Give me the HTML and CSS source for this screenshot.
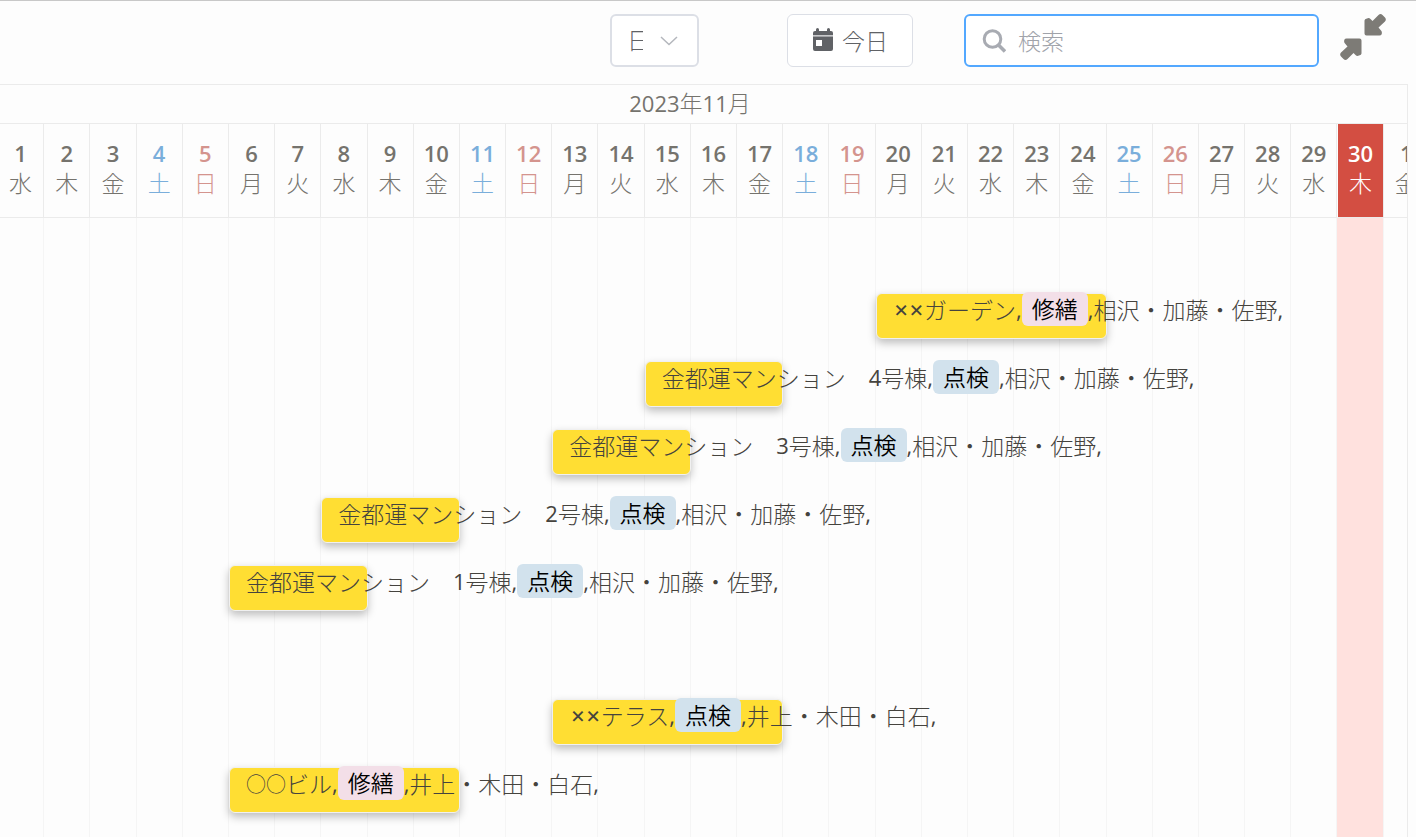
FILE: index.html
```html
<!DOCTYPE html>
<html lang="ja">
<head>
    <meta charset="UTF-8">
    <meta name="viewport" content="width=device-width, initial-scale=1.0">
    <title>工程表</title>
    <link rel="stylesheet" href="styles.css">
</head>
<body>
    <!-- ツールバー -->
    <header class="toolbar">
        <div class="scale">
            <select class="scale-select" aria-label="表示単位">
                <option>日</option>
                <option>週</option>
                <option>月</option>
            </select>
            <svg class="scale-arrow" viewBox="0 0 18 10" width="18" height="10">
                <path d="M1 1l8 7.500 8-7.500" fill="none" stroke="#b4b7bd" stroke-width="1.500"/>
            </svg>
        </div>
        <button type="button" class="today-btn">
            <svg viewBox="0 0 22 24" width="22" height="24" fill="#606266">
                <path d="M4 3V1.500a1.500 1.500 0 0 1 3 0V3h8V1.500a1.500 1.500 0 0 1 3 0V3h1a2 2 0 0 1 2 2v2H1V5a2 2 0 0 1 2-2z"/>
                <path d="M1 7h20v1.500H1z" fill="#c9cacc"/>
                <path fill-rule="evenodd" d="M1 8.500h20V21a2 2 0 0 1-2 2H3a2 2 0 0 1-2-2zM4 12v6h6v-6z"/>
            </svg>
            <span>今日</span>
        </button>
        <div class="search">
            <svg class="search-icon" viewBox="0 0 24 24" width="24" height="24">
                <circle cx="10.500" cy="10" r="8.300" fill="none" stroke="#a8abb2" stroke-width="3"/>
                <path d="M16.500 16l6.500 6.500" stroke="#a8abb2" stroke-width="3.600"/>
            </svg>
            <input type="text" class="search-input" placeholder="検索" aria-label="検索">
        </div>
        <button type="button" class="shrink-btn" aria-label="縮小">
            <svg viewBox="0 0 46 46" width="46" height="46" fill="#7d7b76">
                <path d="M27 4.500Q29 3.500 30.500 5L32.500 7 38.500 1Q40.500-.8 42.500 1L45 3.500Q46.700 5.500 45 7.500L38.500 13.500 41 16.500Q42.500 18 41.500 20.500 41 21.500 39.500 21.500H26.500Q24.500 21.500 24.500 19.500V6.500Q24.500 5 27 4.500z"/>
                <path d="M19 41.500Q17 42.500 15.500 41L13.500 39 7.500 45Q5.500 46.800 3.500 45L1 42.500Q-.7 40.500 1 38.500L7.500 32.500 5 29.500Q3.500 28 4.500 25.500 5 24.500 6.500 24.500H19.500Q21.500 24.500 21.500 26.500V39.500Q21.500 41 19 41.500z"/>
            </svg>
        </button>
    </header>

    <!-- ガントチャート -->
    <main class="gantt">
        <div class="gantt-head">
            <div class="month"><span class="num">2023</span>年<span class="num">11</span>月</div>
            <div class="days" id="days"></div>
        </div>
        <div class="gantt-body">
            <div class="columns" id="columns"></div>
            <div class="row group"></div>
            <div class="row">
                <div class="bar from-20 span-5"><p class="label"><span class="cross">××</span>ガーデン<span class="num">,</span><span class="tag repair">修繕</span><span class="num">,</span>相沢・加藤・佐野<span class="num">,</span></p></div>
            </div>
            <div class="row">
                <div class="bar from-15 span-3"><p class="label">金都運マンション　<span class="num">4</span>号棟<span class="num">,</span><span class="tag check">点検</span><span class="num">,</span>相沢・加藤・佐野<span class="num">,</span></p></div>
            </div>
            <div class="row">
                <div class="bar from-13 span-3"><p class="label">金都運マンション　<span class="num">3</span>号棟<span class="num">,</span><span class="tag check">点検</span><span class="num">,</span>相沢・加藤・佐野<span class="num">,</span></p></div>
            </div>
            <div class="row">
                <div class="bar from-8 span-3"><p class="label">金都運マンション　<span class="num">2</span>号棟<span class="num">,</span><span class="tag check">点検</span><span class="num">,</span>相沢・加藤・佐野<span class="num">,</span></p></div>
            </div>
            <div class="row">
                <div class="bar from-6 span-3"><p class="label">金都運マンション　<span class="num">1</span>号棟<span class="num">,</span><span class="tag check">点検</span><span class="num">,</span>相沢・加藤・佐野<span class="num">,</span></p></div>
            </div>
            <div class="row group"></div>
            <div class="row">
                <div class="bar from-13 span-5"><p class="label"><span class="cross">××</span>テラス<span class="num">,</span><span class="tag check">点検</span><span class="num">,</span>井上・木田・白石<span class="num">,</span></p></div>
            </div>
            <div class="row">
                <div class="bar from-6 span-5"><p class="label"><span class="circle">○○</span>ビル<span class="num">,</span><span class="tag repair">修繕</span><span class="num">,</span>井上・木田・白石<span class="num">,</span></p></div>
            </div>
        </div>
    </main>

    <script src="script.js"></script>
</body>
</html>
```
FILE: styles.css
```css
* {
    margin: 0;
    padding: 0;
    box-sizing: border-box;
}

body {
    min-height: 100vh;
    display: flex;
    flex-direction: column;
    overflow: hidden;
    background-color: #fdfdfd;
    font-family: "Open Sans", "Noto Sans CJK JP", sans-serif;
    font-size: 23px;
    font-weight: 300;
    color: #75736d;
}

button,
input,
select {
    font: inherit;
}

.num {
    font-size: 22px;
    font-weight: 500;
}

/* ツールバー */
.toolbar {
    display: flex;
    justify-content: flex-end;
    align-items: flex-start;
    height: 84px;
    padding: 13px 30px 0 0;
    border-top: 1px solid #c8c8c8;
}

.scale {
    position: relative;
    margin-right: 88px;
}

.scale-select {
    display: block;
    width: 89px;
    height: 53px;
    padding: 0 54px 2px 15px;
    border: 2px solid #dcdfe6;
    border-radius: 6px;
    background-color: #fff;
    color: #606266;
    appearance: none;
    overflow: hidden;
    text-overflow: clip;
}

.scale-arrow {
    position: absolute;
    top: 22px;
    right: 21px;
    pointer-events: none;
}

.today-btn {
    display: flex;
    align-items: center;
    justify-content: center;
    gap: 8px;
    width: 126px;
    height: 53px;
    padding-bottom: 2px;
    margin-right: 51px;
    border: 1px solid #dcdfe6;
    border-radius: 6px;
    background-color: #fff;
    color: #606266;
    cursor: pointer;
}

.search {
    position: relative;
    width: 355px;
    margin-right: 21px;
}

.search-icon {
    position: absolute;
    top: 15px;
    left: 18px;
}

.search-input {
    display: block;
    width: 100%;
    height: 53px;
    padding: 0 16px 0 52px;
    border: 2px solid #53a8ff;
    border-radius: 6px;
    outline: none;
    background-color: #fff;
}

.search-input::placeholder {
    color: #a0a3aa;
}

.shrink-btn {
    width: 46px;
    height: 46px;
    border: none;
    background: none;
    cursor: pointer;
}

.shrink-btn svg {
    display: block;
}

/* ガントチャート */
.gantt {
    flex: 1;
    display: flex;
    flex-direction: column;
    margin-right: 8px;
    border-top: 1px solid #ebebeb;
    border-right: 1px solid #ebebeb;
    overflow: hidden;
}

.gantt-head,
.gantt-body {
    margin-left: -2px;
}

.days,
.columns,
.row {
    display: grid;
    grid-template-columns: repeat(31, 3.279%);
}

.month {
    height: 39px;
    padding-right: 25px;
    border-bottom: 1px solid #ebebeb;
    line-height: 36px;
    text-align: center;
}

.day {
    height: 94px;
    padding-top: 14px;
    border-right: 1px solid #ebebeb;
    border-bottom: 1px solid #ebebeb;
    line-height: 30px;
    text-align: center;
}

.day b {
    display: block;
    font-size: 22px;
    font-weight: 600;
}

.sat {
    color: #7aaedb;
}

.sun {
    color: #d4948e;
}

.day.today {
    border-left: 1px solid #fdfdfd;
    background-color: #d34e42;
    color: #fff;
}

.gantt-body {
    position: relative;
    flex: 1;
}

/* 背景の縦線 */
.columns {
    position: absolute;
    inset: 0;
}

.columns div {
    border-right: 1px solid #f5f5f5;
}

.columns .today {
    background-color: #ffe1de;
}

.row {
    position: relative;
    height: 68px;
    padding-top: 9px;
}

.group {
    height: 66px;
}

.bar {
    height: 46px;
    border: 1px solid #f0f0f0;
    border-radius: 6px;
    background-color: #ffde33;
    box-shadow: 0 4px 8px rgba(0, 0, 0, 0.25);
}

.from-6 { grid-column-start: 6; }
.from-8 { grid-column-start: 8; }
.from-13 { grid-column-start: 13; }
.from-15 { grid-column-start: 15; }
.from-20 { grid-column-start: 20; }
.span-3 { grid-column-end: span 3; }
.span-5 { grid-column-end: span 5; }

.label {
    display: flex;
    align-items: center;
    height: 30px;
    padding-left: 16px;
    color: #45433e;
    white-space: pre;
}

.cross {
    padding-left: 1px;
    font-family: Inter, sans-serif;
    font-weight: 400;
}

.circle {
    font-family: "Noto Sans CJK JP", sans-serif;
    font-size: 20px;
}

.tag {
    height: 34px;
    padding: 0 10px;
    border-radius: 6px;
    color: #000;
    font-weight: 350;
    line-height: 34px;
}

.repair {
    background-color: #f3dfe8;
}

.check {
    background-color: #d2e2ed;
}
```
FILE: script.js
```js
const weekdays = ['水', '木', '金', '土', '日', '月', '火'];
const today = 30;
const days = document.getElementById('days');
const columns = document.getElementById('columns');

// 11月1日から翌月1日まで
for (let i = 0; i < 31; i++) {
    const name = weekdays[i % 7];
    const cell = document.createElement('div');
    cell.className = 'day';
    if (name === '土') cell.classList.add('sat');
    if (name === '日') cell.classList.add('sun');
    cell.innerHTML = `<b>${i % 30 + 1}</b>${name}`;

    const column = document.createElement('div');
    if (i + 1 === today) {
        cell.classList.add('today');
        column.className = 'today';
    }
    days.appendChild(cell);
    columns.appendChild(column);
}
```
